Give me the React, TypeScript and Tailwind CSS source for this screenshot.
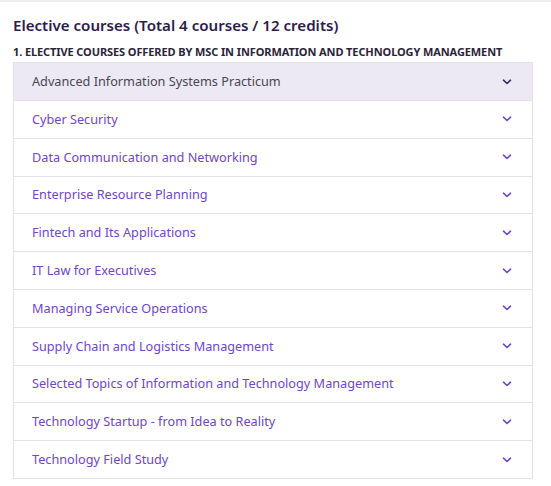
import React from "react";

const courses = [
  "Advanced Information Systems Practicum",
  "Cyber Security",
  "Data Communication and Networking",
  "Enterprise Resource Planning",
  "Fintech and Its Applications",
  "IT Law for Executives",
  "Managing Service Operations",
  "Supply Chain and Logistics Management",
  "Selected Topics of Information and Technology Management",
  "Technology Startup - from Idea to Reality",
  "Technology Field Study",
];

function Chevron({ active }: { active: boolean }) {
  return (
    <svg width="10" height="6" viewBox="0 0 10 6" fill="none">
      <path
        d="M1.5 1.2 L5 4.5 L8.5 1.2"
        stroke={active ? "#3b2a5c" : "#6f46c8"}
        strokeWidth="1.6"
        strokeLinecap="round"
        strokeLinejoin="round"
      />
    </svg>
  );
}

export default function App() {
  return (
    <div
      className="w-[551px] h-[486px] bg-white border-t-2 border-[#eeeeee]"
      style={{ fontFamily: '"Noto Sans", sans-serif' }}
    >
      <div className="px-[13px] pt-[12px]">
        <h2 className="text-[15.1px] leading-[22px] font-semibold text-[#2e1c4a]">
          Elective courses (Total 4 courses / 12 credits)
        </h2>
        <div className="mt-[9px] text-[11px] leading-[13px] font-bold text-[#2b2438] uppercase tracking-[-0.1px]">
          1. Elective courses offered by MSc in Information and Technology Management
        </div>
        <div className="mt-[4px] w-[520px] border border-[#e2e0ea]">
          {courses.map((c, i) => (
            <div
              key={c}
              className={
                "flex items-center justify-between pl-[18px] pr-[20px] " +
                (i > 0 ? "h-[37.8px] border-t border-[#e2e0ea] " : "h-[37px] ") +
                (i === 0 ? "bg-[#ece9f5]" : "bg-white")
              }
            >
              <span
                className={
                  "text-[12.7px] " + (i === 0 ? "text-[#4a4652]" : "text-[#6f46c8]")
                }
              >
                {c}
              </span>
              <Chevron active={i === 0} />
            </div>
          ))}
        </div>
      </div>
    </div>
  );
}
